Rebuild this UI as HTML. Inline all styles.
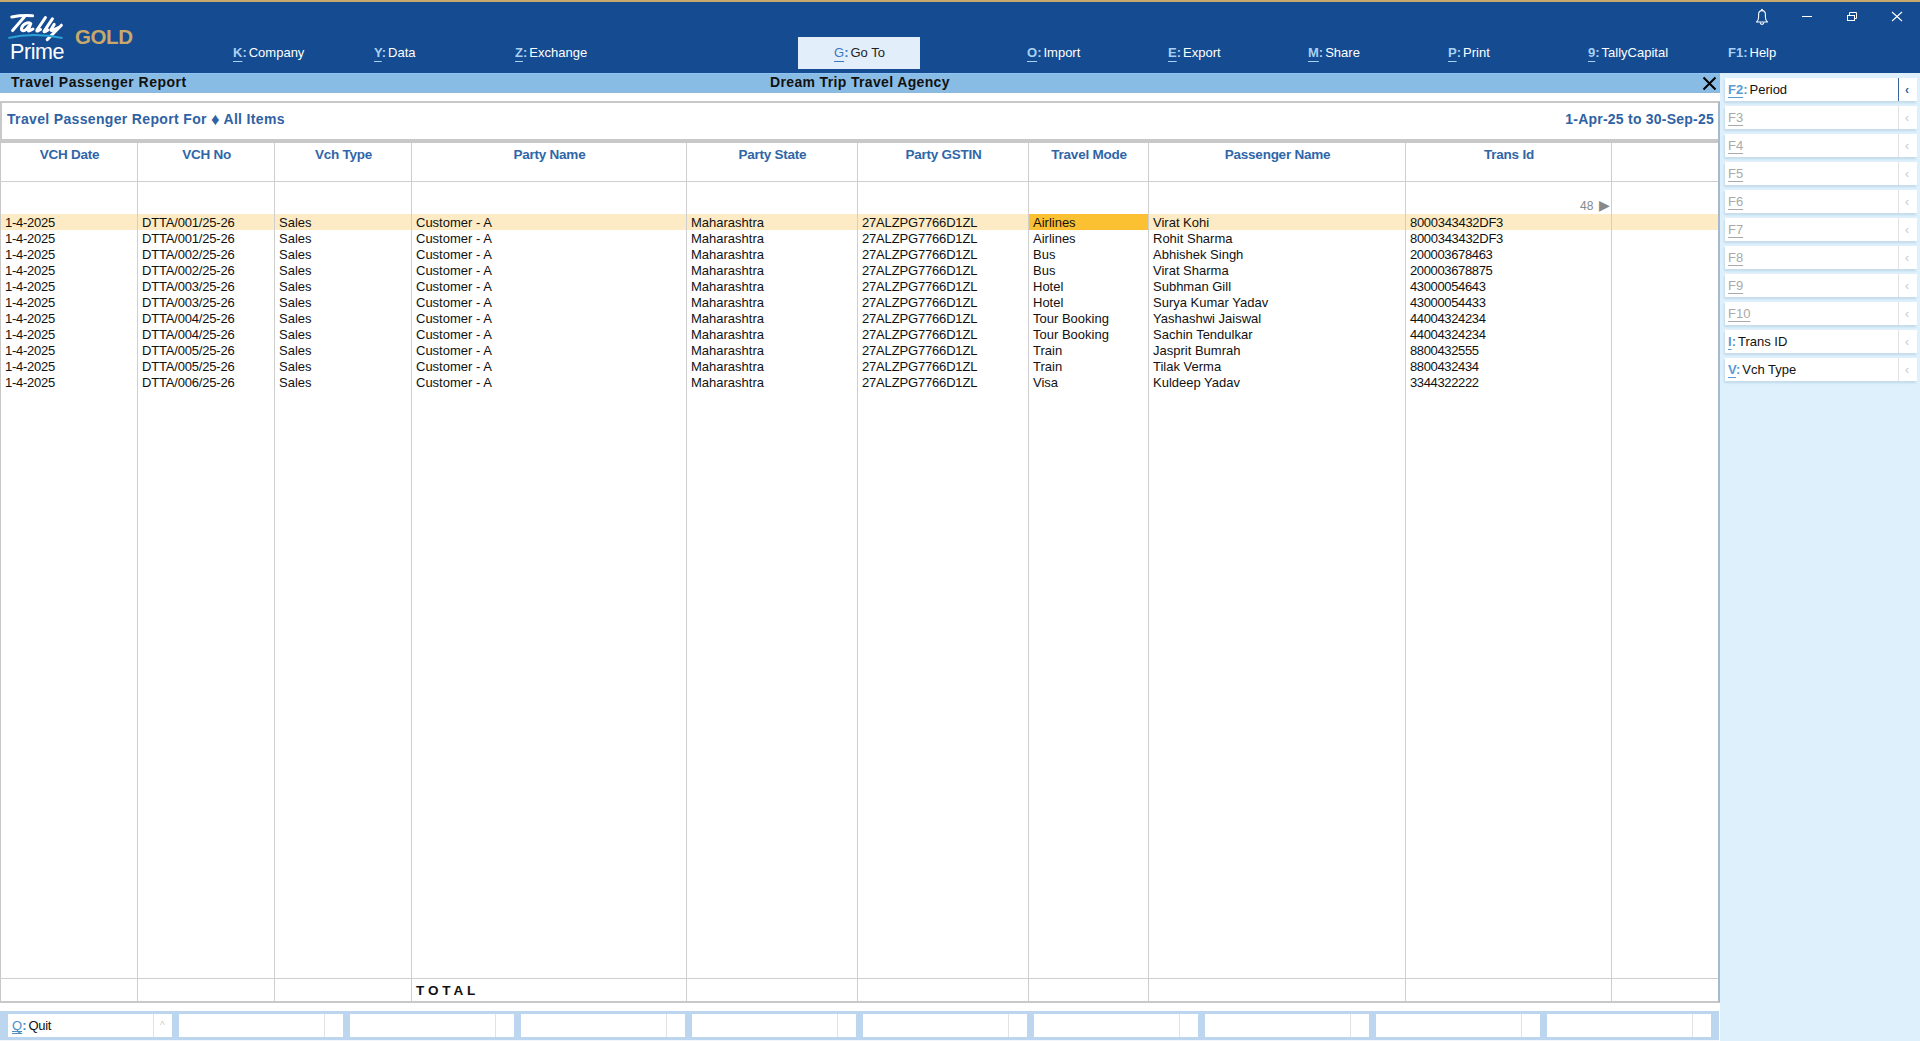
<!DOCTYPE html>
<html><head><meta charset="utf-8"><style>
*{margin:0;padding:0;box-sizing:border-box}
html,body{width:1920px;height:1041px;overflow:hidden;background:#fff;font-family:"Liberation Sans",sans-serif}
.a{position:absolute;white-space:pre}
span{text-decoration-skip-ink:none}
#gold{left:0;top:0;width:1920px;height:2px;background:#C9A96B}
#hdr{left:0;top:2px;width:1920px;height:71px;background:#144B91}
.mi{position:absolute;top:44px;height:18px;line-height:18px;font-size:13px;color:#fff;white-space:pre}
.mi .k{color:#A9D0F5;font-weight:bold;text-decoration:underline;text-underline-offset:4px;text-decoration-thickness:1px}
.mi .c{color:#A9D0F5;font-weight:bold;margin-right:2px}
#goto{left:798px;top:37px;width:122px;height:32px;background:#E3EEFB}
#tbar{left:0;top:73px;width:1720px;height:20px;background:#89BCE5;border-top:1px solid #8FC3F3;border-bottom:1px solid #91B6D6}
#panel{left:1720px;top:93px;width:200px;height:948px;background:#DEF0FC}
#panel2{left:1720px;top:73px;width:200px;height:20px;background:#DEF0FC}
.ttl{position:absolute;top:72px;height:20px;line-height:20px;font-size:14px;font-weight:bold;color:#111;white-space:pre}
#sbox{left:0;top:101px;width:1720px;height:42px;border:2px solid #C8C8C8;border-bottom:0;border-right-color:#A6B9CD}
#tbox{left:0;top:143px;width:1720px;height:860px;border:1px solid #C8C8C8;border-top:0;border-bottom:2px solid #C8C8C8;border-right:2px solid #A6B9CD}
#sub{left:0;top:139px;width:1718px;height:4px;background:#C8C8C8}
.st{position:absolute;top:111px;height:16px;line-height:16px;font-size:14px;font-weight:bold;color:#2F62A4;white-space:pre}
.vl{position:absolute;top:143px;height:858px;width:1px;background:#CFCFCF}
.hl{position:absolute;left:0;width:1718px;height:1px;background:#CFCFCF}
.ch{position:absolute;height:16px;line-height:16px;font-weight:bold;color:#2F66A8;text-align:center;white-space:pre}
.td{position:absolute;height:16px;line-height:16px;color:#111;white-space:pre}
.fb{position:absolute;left:1725px;width:192px;height:23px;background:#fff;box-shadow:-1px 2px 2px rgba(130,160,190,.28)}
.fb .d{position:absolute;left:173px;top:0;width:1px;height:23px;background:#E2E2E2}
.fb .ar{position:absolute;left:180px;top:4px;font-size:12px;line-height:16px;color:#C8C8C8}
.fb .t{position:absolute;left:3px;top:4px;height:16px;line-height:16px;font-size:13px;color:#111;white-space:pre}
.fb .k{color:#5A9AD2;font-weight:bold;text-decoration:underline;text-underline-offset:3px}
.fb .c{color:#5A9AD2;font-weight:bold;margin-right:2px}
.fb.g .t{color:#A9A9A9}
.fb.g .k{color:#A9A9A9;font-weight:normal}
#bbar{left:0;top:1011px;width:1719px;height:29px;background:#BBD6EE}
#bstrip{left:0;top:1040px;width:1719px;height:1px;background:#F3F7FB}
.bb{position:absolute;top:1014px;width:164px;height:23px;background:#fff}
.bb .d{position:absolute;left:145px;top:0;width:1px;height:23px;background:#E2E2E2}
</style></head><body>
<div class="a" id="gold"></div><div class="a" id="hdr"></div>
<svg class="a" style="left:0;top:0" width="150" height="72" viewBox="0 0 150 72">
<g stroke="#fff" stroke-width="3" fill="none" stroke-linecap="round" stroke-linejoin="round">
<path d="M11.8 17 C18 15.8 26 15.4 32.6 15.8"/>
<path d="M24.5 16.8 L12.6 30.6"/>
<path d="M30.8 23.6 C28.5 21.8 23 23.2 21.6 28 C20.8 31 23.8 31.6 26.2 29.4 L30.8 23.6 L28.2 30 Q27.8 31.4 29.8 30.6 L33 29"/>
<path d="M45.4 17.6 L37 30 Q36.2 31.4 38.2 30.8 L40.5 29.5"/>
<path d="M52.4 18.8 L44.2 31.2 Q43.6 32 45.6 31.4 L48 30"/>
<path d="M54.2 24.4 L51 29.6 Q50.6 31 52.6 30.4 L58.5 27.5"/>
<path d="M61.4 25.2 L47.2 39.6"/>
</g>
<path d="M8.4 38 Q33 32 62.5 38" stroke="#2AA3D6" stroke-width="2.2" fill="none"/>
<text x="10" y="58.8" font-family="Liberation Sans" font-size="21.5" letter-spacing="-0.4" fill="#fff">Prime</text>
<text x="75" y="43.8" font-family="Liberation Sans" font-weight="bold" font-size="20.5" letter-spacing="-0.4" fill="#C9A96B">GOLD</text>
</svg>
<svg class="a" style="left:1750px;top:5px" width="160" height="25" viewBox="1750 5 160 25">
<path d="M1756.5 22 Q1758.6 20.6 1758.6 17 L1758.6 14.6 Q1758.6 10.6 1762 10.6 Q1765.4 10.6 1765.4 14.6 L1765.4 17 Q1765.4 20.6 1767.5 22 Z" stroke="#fff" stroke-width="1.1" fill="none" stroke-linejoin="round"/>
<path d="M1760.2 22.6 A1.8 1.8 0 0 0 1763.8 22.6" stroke="#fff" stroke-width="1.1" fill="none"/>
<circle cx="1762" cy="9.6" r="0.9" fill="#fff"/>
<line x1="1802" y1="16.5" x2="1812" y2="16.5" stroke="#fff" stroke-width="1"/>
<rect x="1847.5" y="15.5" width="7" height="5" stroke="#fff" stroke-width="1" fill="none"/>
<path d="M1849.5 15.5 V12.5 H1856.5 V18.5 H1854.5" stroke="#fff" stroke-width="1" fill="none"/>
<path d="M1892 12 L1902 21 M1902 12 L1892 21" stroke="#fff" stroke-width="1.1"/>
</svg>
<div class="a" id="goto"></div>
<div class="mi" style="left:233px"><span class="k">K</span><span class="c">:</span>Company</div>
<div class="mi" style="left:374px"><span class="k">Y</span><span class="c">:</span>Data</div>
<div class="mi" style="left:515px"><span class="k">Z</span><span class="c">:</span>Exchange</div>
<div class="mi" style="left:834px;color:#222"><span class="k" style="color:#3B78BE;font-weight:normal">G</span><span class="c" style="color:#3B78BE">:</span>Go To</div>
<div class="mi" style="left:1027px"><span class="k">O</span><span class="c">:</span>Import</div>
<div class="mi" style="left:1168px"><span class="k">E</span><span class="c">:</span>Export</div>
<div class="mi" style="left:1308px"><span class="k">M</span><span class="c">:</span>Share</div>
<div class="mi" style="left:1448px"><span class="k">P</span><span class="c">:</span>Print</div>
<div class="mi" style="left:1588px"><span class="k">9</span><span class="c">:</span>TallyCapital</div>
<div class="mi" style="left:1728px"><span class="c" style="font-weight:bold">F1:</span>Help</div>
<div class="a" id="tbar"></div>
<div class="ttl" style="left:11px;letter-spacing:0.5px">Travel Passenger Report</div>
<div class="ttl" style="left:770px;letter-spacing:0.35px">Dream Trip Travel Agency</div>
<svg class="a" style="left:1700px;top:74px" width="20" height="18" viewBox="1700 74 20 18"><path d="M1703.5 77.5 L1715.5 89.5 M1715.5 77.5 L1703.5 89.5" stroke="#000" stroke-width="2"/></svg>
<div class="a" id="panel"></div><div class="a" id="panel2"></div>
<div class="a" id="sbox"></div><div class="a" id="tbox"></div><div class="a" id="sub"></div>
<div class="st" style="left:7px;letter-spacing:0.34px">Travel Passenger Report For <span style="font-size:17px;line-height:10px;vertical-align:-1px;letter-spacing:0">&#9830;</span> All Items</div>
<div class="st" style="right:206px;letter-spacing:0.23px">1-Apr-25 to 30-Sep-25</div>
<div class="hl" style="top:181px"></div><div class="hl" style="top:978px"></div>
<div class="a" style="left:1px;top:214px;width:1717px;height:16px;background:#FDEBC5"></div>
<div class="a" style="left:1029px;top:214px;width:119px;height:16px;background:#FCC033"></div>
<div class="vl" style="left:137px"></div>
<div class="vl" style="left:274px"></div>
<div class="vl" style="left:411px"></div>
<div class="vl" style="left:686px"></div>
<div class="vl" style="left:857px"></div>
<div class="vl" style="left:1028px"></div>
<div class="vl" style="left:1148px"></div>
<div class="vl" style="left:1405px"></div>
<div class="vl" style="left:1611px"></div>
<div class="ch" style="left:1px;width:137px;top:146.5px;font-size:13.5px;letter-spacing:-0.25px">VCH Date</div>
<div class="ch" style="left:138px;width:137px;top:146.5px;font-size:13.5px;letter-spacing:-0.25px">VCH No</div>
<div class="ch" style="left:275px;width:137px;top:146.5px;font-size:13.5px;letter-spacing:-0.25px">Vch Type</div>
<div class="ch" style="left:412px;width:275px;top:146.5px;font-size:13.5px;letter-spacing:-0.25px">Party Name</div>
<div class="ch" style="left:687px;width:171px;top:146.5px;font-size:13.5px;letter-spacing:-0.25px">Party State</div>
<div class="ch" style="left:858px;width:171px;top:146.5px;font-size:13.5px;letter-spacing:-0.25px">Party GSTIN</div>
<div class="ch" style="left:1029px;width:120px;top:146.5px;font-size:13.5px;letter-spacing:-0.25px">Travel Mode</div>
<div class="ch" style="left:1149px;width:257px;top:146.5px;font-size:13.5px;letter-spacing:-0.25px">Passenger Name</div>
<div class="ch" style="left:1406px;width:206px;top:146.5px;font-size:13.5px;letter-spacing:-0.25px">Trans Id</div>
<div class="td" style="left:5px;top:215px;font-size:13px;letter-spacing:-0.27px">1-4-2025</div>
<div class="td" style="left:142px;top:215px;font-size:13px;letter-spacing:-0.18px">DTTA/001/25-26</div>
<div class="td" style="left:279px;top:215px;font-size:13px;letter-spacing:-0.00px">Sales</div>
<div class="td" style="left:416px;top:215px;font-size:13px;letter-spacing:-0.00px">Customer - A</div>
<div class="td" style="left:691px;top:215px;font-size:13px;letter-spacing:-0.00px">Maharashtra</div>
<div class="td" style="left:862px;top:215px;font-size:13px;letter-spacing:-0.17px">27ALZPG7766D1ZL</div>
<div class="td" style="left:1033px;top:215px;font-size:13px;letter-spacing:-0.00px">Airlines</div>
<div class="td" style="left:1153px;top:215px;font-size:13px;letter-spacing:-0.00px">Virat Kohi</div>
<div class="td" style="left:1410px;top:215px;font-size:13px;letter-spacing:-0.30px">8000343432DF3</div>
<div class="td" style="left:5px;top:231px;font-size:13px;letter-spacing:-0.27px">1-4-2025</div>
<div class="td" style="left:142px;top:231px;font-size:13px;letter-spacing:-0.18px">DTTA/001/25-26</div>
<div class="td" style="left:279px;top:231px;font-size:13px;letter-spacing:-0.00px">Sales</div>
<div class="td" style="left:416px;top:231px;font-size:13px;letter-spacing:-0.00px">Customer - A</div>
<div class="td" style="left:691px;top:231px;font-size:13px;letter-spacing:-0.00px">Maharashtra</div>
<div class="td" style="left:862px;top:231px;font-size:13px;letter-spacing:-0.17px">27ALZPG7766D1ZL</div>
<div class="td" style="left:1033px;top:231px;font-size:13px;letter-spacing:-0.00px">Airlines</div>
<div class="td" style="left:1153px;top:231px;font-size:13px;letter-spacing:-0.00px">Rohit Sharma</div>
<div class="td" style="left:1410px;top:231px;font-size:13px;letter-spacing:-0.30px">8000343432DF3</div>
<div class="td" style="left:5px;top:247px;font-size:13px;letter-spacing:-0.27px">1-4-2025</div>
<div class="td" style="left:142px;top:247px;font-size:13px;letter-spacing:-0.18px">DTTA/002/25-26</div>
<div class="td" style="left:279px;top:247px;font-size:13px;letter-spacing:-0.00px">Sales</div>
<div class="td" style="left:416px;top:247px;font-size:13px;letter-spacing:-0.00px">Customer - A</div>
<div class="td" style="left:691px;top:247px;font-size:13px;letter-spacing:-0.00px">Maharashtra</div>
<div class="td" style="left:862px;top:247px;font-size:13px;letter-spacing:-0.17px">27ALZPG7766D1ZL</div>
<div class="td" style="left:1033px;top:247px;font-size:13px;letter-spacing:-0.00px">Bus</div>
<div class="td" style="left:1153px;top:247px;font-size:13px;letter-spacing:-0.00px">Abhishek Singh</div>
<div class="td" style="left:1410px;top:247px;font-size:13px;letter-spacing:-0.36px">200003678463</div>
<div class="td" style="left:5px;top:263px;font-size:13px;letter-spacing:-0.27px">1-4-2025</div>
<div class="td" style="left:142px;top:263px;font-size:13px;letter-spacing:-0.18px">DTTA/002/25-26</div>
<div class="td" style="left:279px;top:263px;font-size:13px;letter-spacing:-0.00px">Sales</div>
<div class="td" style="left:416px;top:263px;font-size:13px;letter-spacing:-0.00px">Customer - A</div>
<div class="td" style="left:691px;top:263px;font-size:13px;letter-spacing:-0.00px">Maharashtra</div>
<div class="td" style="left:862px;top:263px;font-size:13px;letter-spacing:-0.17px">27ALZPG7766D1ZL</div>
<div class="td" style="left:1033px;top:263px;font-size:13px;letter-spacing:-0.00px">Bus</div>
<div class="td" style="left:1153px;top:263px;font-size:13px;letter-spacing:-0.00px">Virat Sharma</div>
<div class="td" style="left:1410px;top:263px;font-size:13px;letter-spacing:-0.36px">200003678875</div>
<div class="td" style="left:5px;top:279px;font-size:13px;letter-spacing:-0.27px">1-4-2025</div>
<div class="td" style="left:142px;top:279px;font-size:13px;letter-spacing:-0.18px">DTTA/003/25-26</div>
<div class="td" style="left:279px;top:279px;font-size:13px;letter-spacing:-0.00px">Sales</div>
<div class="td" style="left:416px;top:279px;font-size:13px;letter-spacing:-0.00px">Customer - A</div>
<div class="td" style="left:691px;top:279px;font-size:13px;letter-spacing:-0.00px">Maharashtra</div>
<div class="td" style="left:862px;top:279px;font-size:13px;letter-spacing:-0.17px">27ALZPG7766D1ZL</div>
<div class="td" style="left:1033px;top:279px;font-size:13px;letter-spacing:-0.00px">Hotel</div>
<div class="td" style="left:1153px;top:279px;font-size:13px;letter-spacing:-0.00px">Subhman Gill</div>
<div class="td" style="left:1410px;top:279px;font-size:13px;letter-spacing:-0.36px">43000054643</div>
<div class="td" style="left:5px;top:295px;font-size:13px;letter-spacing:-0.27px">1-4-2025</div>
<div class="td" style="left:142px;top:295px;font-size:13px;letter-spacing:-0.18px">DTTA/003/25-26</div>
<div class="td" style="left:279px;top:295px;font-size:13px;letter-spacing:-0.00px">Sales</div>
<div class="td" style="left:416px;top:295px;font-size:13px;letter-spacing:-0.00px">Customer - A</div>
<div class="td" style="left:691px;top:295px;font-size:13px;letter-spacing:-0.00px">Maharashtra</div>
<div class="td" style="left:862px;top:295px;font-size:13px;letter-spacing:-0.17px">27ALZPG7766D1ZL</div>
<div class="td" style="left:1033px;top:295px;font-size:13px;letter-spacing:-0.00px">Hotel</div>
<div class="td" style="left:1153px;top:295px;font-size:13px;letter-spacing:-0.00px">Surya Kumar Yadav</div>
<div class="td" style="left:1410px;top:295px;font-size:13px;letter-spacing:-0.36px">43000054433</div>
<div class="td" style="left:5px;top:311px;font-size:13px;letter-spacing:-0.27px">1-4-2025</div>
<div class="td" style="left:142px;top:311px;font-size:13px;letter-spacing:-0.18px">DTTA/004/25-26</div>
<div class="td" style="left:279px;top:311px;font-size:13px;letter-spacing:-0.00px">Sales</div>
<div class="td" style="left:416px;top:311px;font-size:13px;letter-spacing:-0.00px">Customer - A</div>
<div class="td" style="left:691px;top:311px;font-size:13px;letter-spacing:-0.00px">Maharashtra</div>
<div class="td" style="left:862px;top:311px;font-size:13px;letter-spacing:-0.17px">27ALZPG7766D1ZL</div>
<div class="td" style="left:1033px;top:311px;font-size:13px;letter-spacing:-0.00px">Tour Booking</div>
<div class="td" style="left:1153px;top:311px;font-size:13px;letter-spacing:-0.00px">Yashashwi Jaiswal</div>
<div class="td" style="left:1410px;top:311px;font-size:13px;letter-spacing:-0.36px">44004324234</div>
<div class="td" style="left:5px;top:327px;font-size:13px;letter-spacing:-0.27px">1-4-2025</div>
<div class="td" style="left:142px;top:327px;font-size:13px;letter-spacing:-0.18px">DTTA/004/25-26</div>
<div class="td" style="left:279px;top:327px;font-size:13px;letter-spacing:-0.00px">Sales</div>
<div class="td" style="left:416px;top:327px;font-size:13px;letter-spacing:-0.00px">Customer - A</div>
<div class="td" style="left:691px;top:327px;font-size:13px;letter-spacing:-0.00px">Maharashtra</div>
<div class="td" style="left:862px;top:327px;font-size:13px;letter-spacing:-0.17px">27ALZPG7766D1ZL</div>
<div class="td" style="left:1033px;top:327px;font-size:13px;letter-spacing:-0.00px">Tour Booking</div>
<div class="td" style="left:1153px;top:327px;font-size:13px;letter-spacing:-0.00px">Sachin Tendulkar</div>
<div class="td" style="left:1410px;top:327px;font-size:13px;letter-spacing:-0.36px">44004324234</div>
<div class="td" style="left:5px;top:343px;font-size:13px;letter-spacing:-0.27px">1-4-2025</div>
<div class="td" style="left:142px;top:343px;font-size:13px;letter-spacing:-0.18px">DTTA/005/25-26</div>
<div class="td" style="left:279px;top:343px;font-size:13px;letter-spacing:-0.00px">Sales</div>
<div class="td" style="left:416px;top:343px;font-size:13px;letter-spacing:-0.00px">Customer - A</div>
<div class="td" style="left:691px;top:343px;font-size:13px;letter-spacing:-0.00px">Maharashtra</div>
<div class="td" style="left:862px;top:343px;font-size:13px;letter-spacing:-0.17px">27ALZPG7766D1ZL</div>
<div class="td" style="left:1033px;top:343px;font-size:13px;letter-spacing:-0.00px">Train</div>
<div class="td" style="left:1153px;top:343px;font-size:13px;letter-spacing:-0.00px">Jasprit Bumrah</div>
<div class="td" style="left:1410px;top:343px;font-size:13px;letter-spacing:-0.36px">8800432555</div>
<div class="td" style="left:5px;top:359px;font-size:13px;letter-spacing:-0.27px">1-4-2025</div>
<div class="td" style="left:142px;top:359px;font-size:13px;letter-spacing:-0.18px">DTTA/005/25-26</div>
<div class="td" style="left:279px;top:359px;font-size:13px;letter-spacing:-0.00px">Sales</div>
<div class="td" style="left:416px;top:359px;font-size:13px;letter-spacing:-0.00px">Customer - A</div>
<div class="td" style="left:691px;top:359px;font-size:13px;letter-spacing:-0.00px">Maharashtra</div>
<div class="td" style="left:862px;top:359px;font-size:13px;letter-spacing:-0.17px">27ALZPG7766D1ZL</div>
<div class="td" style="left:1033px;top:359px;font-size:13px;letter-spacing:-0.00px">Train</div>
<div class="td" style="left:1153px;top:359px;font-size:13px;letter-spacing:-0.00px">Tilak Verma</div>
<div class="td" style="left:1410px;top:359px;font-size:13px;letter-spacing:-0.36px">8800432434</div>
<div class="td" style="left:5px;top:375px;font-size:13px;letter-spacing:-0.27px">1-4-2025</div>
<div class="td" style="left:142px;top:375px;font-size:13px;letter-spacing:-0.18px">DTTA/006/25-26</div>
<div class="td" style="left:279px;top:375px;font-size:13px;letter-spacing:-0.00px">Sales</div>
<div class="td" style="left:416px;top:375px;font-size:13px;letter-spacing:-0.00px">Customer - A</div>
<div class="td" style="left:691px;top:375px;font-size:13px;letter-spacing:-0.00px">Maharashtra</div>
<div class="td" style="left:862px;top:375px;font-size:13px;letter-spacing:-0.17px">27ALZPG7766D1ZL</div>
<div class="td" style="left:1033px;top:375px;font-size:13px;letter-spacing:-0.00px">Visa</div>
<div class="td" style="left:1153px;top:375px;font-size:13px;letter-spacing:-0.00px">Kuldeep Yadav</div>
<div class="td" style="left:1410px;top:375px;font-size:13px;letter-spacing:-0.36px">3344322222</div>
<div class="a" style="left:1580px;top:199px;font-size:12px;line-height:14px;color:#888">48<span style="margin-left:6px;font-size:13.5px">&#9654;</span></div>
<div class="a" style="left:416px;top:983px;font-size:13.5px;line-height:16px;font-weight:bold;letter-spacing:3.9px;color:#111">TOTAL</div>
<div class="fb" style="top:78px"><div class="t"><span class="k">F2</span><span class="c">:</span>Period</div><div class="d" style="background:#3A64A0"></div><div class="ar" style="color:#2F5F9F;font-weight:bold">&#8249;</div></div>
<div class="fb g" style="top:106px"><div class="t"><span class="k">F3</span></div><div class="d"></div><div class="ar">&#8249;</div></div>
<div class="fb g" style="top:134px"><div class="t"><span class="k">F4</span></div><div class="d"></div><div class="ar">&#8249;</div></div>
<div class="fb g" style="top:162px"><div class="t"><span class="k">F5</span></div><div class="d"></div><div class="ar">&#8249;</div></div>
<div class="fb g" style="top:190px"><div class="t"><span class="k">F6</span></div><div class="d"></div><div class="ar">&#8249;</div></div>
<div class="fb g" style="top:218px"><div class="t"><span class="k">F7</span></div><div class="d"></div><div class="ar">&#8249;</div></div>
<div class="fb g" style="top:246px"><div class="t"><span class="k">F8</span></div><div class="d"></div><div class="ar">&#8249;</div></div>
<div class="fb g" style="top:274px"><div class="t"><span class="k">F9</span></div><div class="d"></div><div class="ar">&#8249;</div></div>
<div class="fb g" style="top:302px"><div class="t"><span class="k">F10</span></div><div class="d"></div><div class="ar">&#8249;</div></div>
<div class="fb" style="top:330px"><div class="t"><span class="k">I</span><span class="c">:</span>Trans ID</div><div class="d"></div><div class="ar">&#8249;</div></div>
<div class="fb" style="top:358px"><div class="t"><span class="k">V</span><span class="c">:</span>Vch Type</div><div class="d"></div><div class="ar">&#8249;</div></div>
<div class="a" id="bbar"></div><div class="a" id="bstrip"></div>
<div class="bb" style="left:8px"><div class="d"></div><div class="a" style="left:4px;top:4px;font-size:13px;line-height:16px;color:#111"><span style="color:#4B8EC4;text-decoration:underline double;text-underline-offset:1px;text-decoration-skip-ink:none">Q</span><span style="color:#4B8EC4;font-weight:bold;margin-right:2px">:</span><span style="letter-spacing:-0.3px">Quit</span></div><div class="a" style="left:152px;top:6px;font-size:10px;color:#CCC">^</div></div>
<div class="bb" style="left:179px"><div class="d"></div></div>
<div class="bb" style="left:350px"><div class="d"></div></div>
<div class="bb" style="left:521px"><div class="d"></div></div>
<div class="bb" style="left:692px"><div class="d"></div></div>
<div class="bb" style="left:863px"><div class="d"></div></div>
<div class="bb" style="left:1034px"><div class="d"></div></div>
<div class="bb" style="left:1205px"><div class="d"></div></div>
<div class="bb" style="left:1376px"><div class="d"></div></div>
<div class="bb" style="left:1547px"><div class="d"></div></div>
</body></html>
